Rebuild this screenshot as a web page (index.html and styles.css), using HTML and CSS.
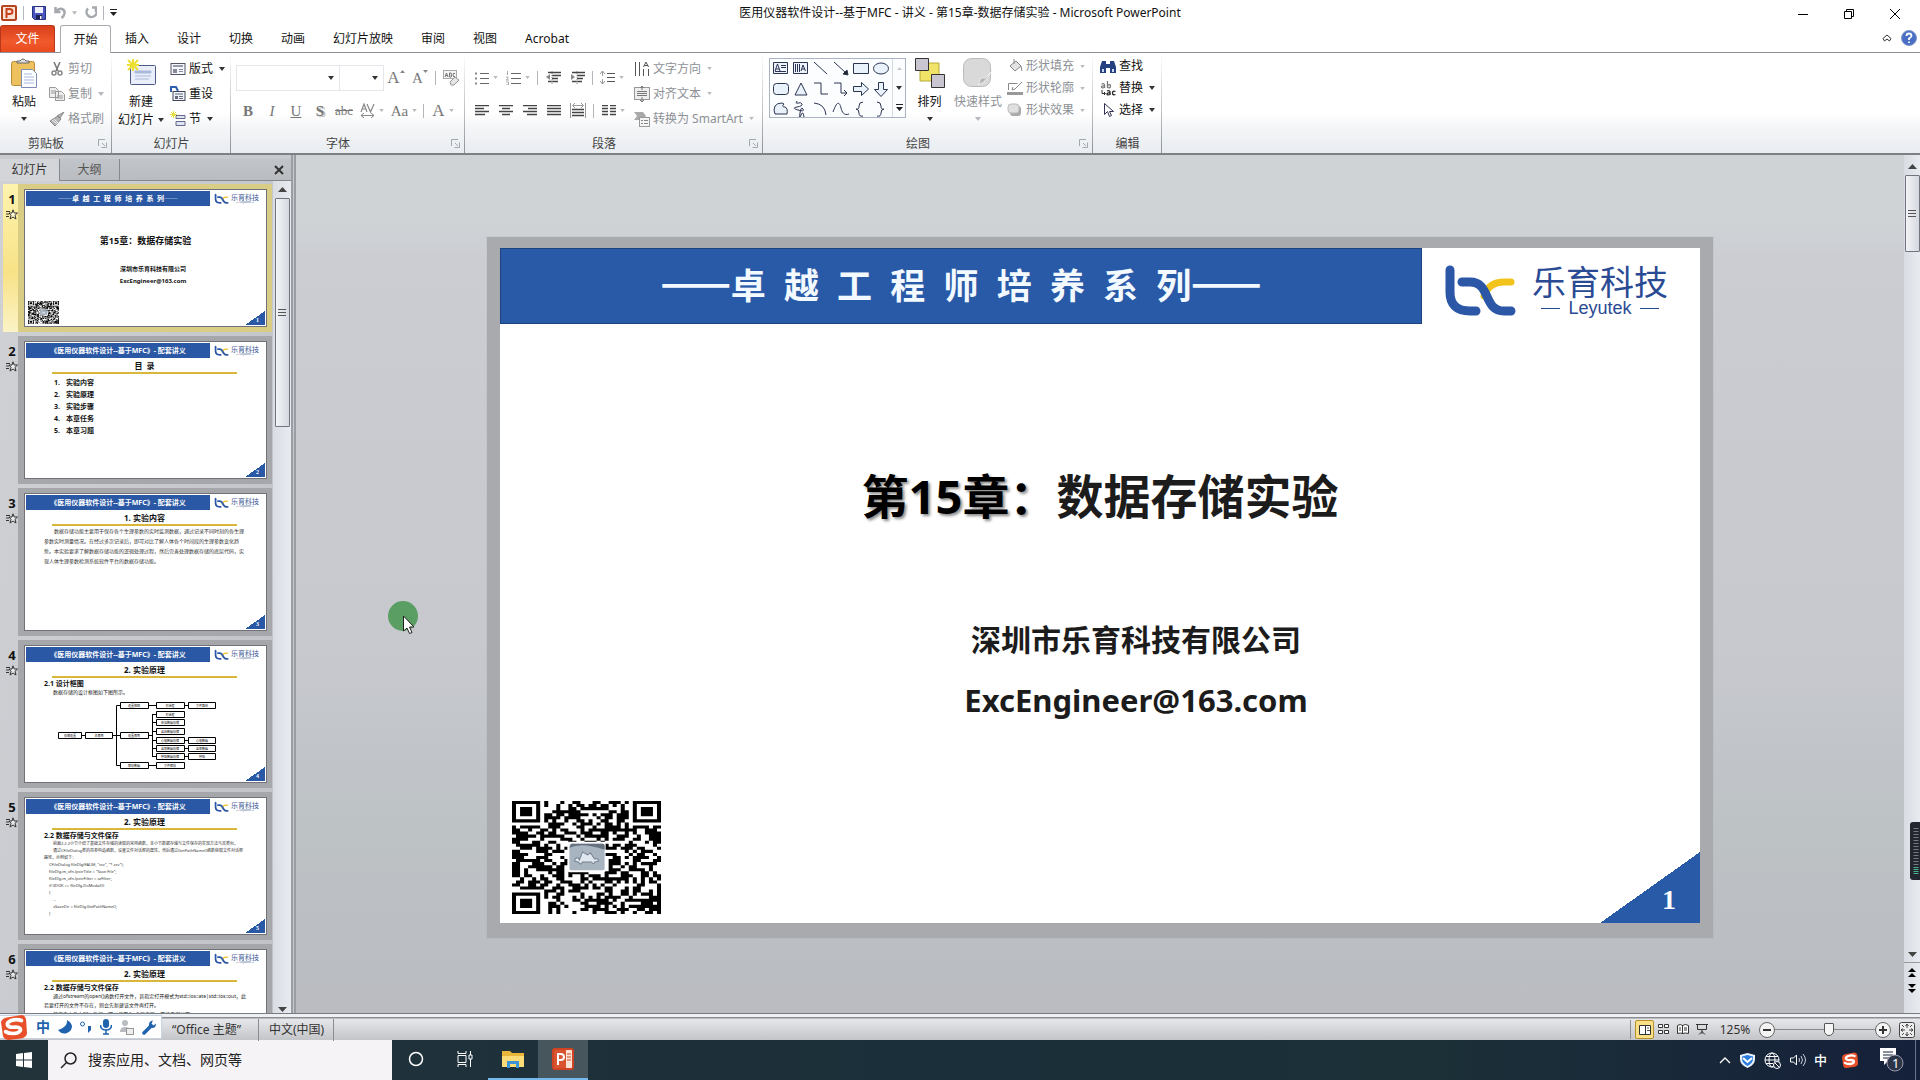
FILE: index.html
```html
<!DOCTYPE html>
<html lang="zh-CN">
<head>
<meta charset="utf-8">
<meta name="viewport" content="width=device-width, initial-scale=1">
<title>医用仪器软件设计--基于MFC - 讲义 - 第15章-数据存储实验 - Microsoft PowerPoint</title>
<link rel="stylesheet" href="styles.css">
</head>
<body>
<svg class="defs" aria-hidden="true">
  <symbol id="dd" viewBox="0 0 6 4"><path d="M0 0h6L3 4z" fill="currentColor"/></symbol>
  <symbol id="launch" viewBox="0 0 9 9"><path d="M.5 7V.5H7M4 4l3 3M8.500 3.500v5h-5" fill="none" stroke="#a3a8b0"/></symbol>
  <symbol id="bc" viewBox="0 0 76 54"><g fill="none" stroke-width="9" stroke-linecap="round"><path d="M69 20h-7q-15 0-20 14" stroke="#f2c31b" stroke-width="7"/><path d="M8 8v22q0 19 20 19h6M20 20h8c21 0 13 29 34 29h7" stroke="#2b57a6"/></g></symbol>
  <symbol id="anim" viewBox="0 0 12 11"><path d="M7 .8l1.200 3.200h3.300L9 6.300l1 3.700-3-2-3 2 1-3.700L3 4h3zM0 2.500h4M0 5h3M0 7.500h3" fill="#fff8" stroke="#222" stroke-width=".9"/></symbol>
  <symbol id="sogou" viewBox="0 0 28 28"><path d="M5 4l17-3q4 0 5 5l1 15q-1 4-5 5L8 28q-5 0-6-5L0 9q1-4 5-5z" fill="#e8502a"/><path d="M22 7q-5-2-11 0-5 2-4 5 2 3 8 2 6 0 6 3-1 4-8 4-5 0-8-2" fill="none" stroke="#fff" stroke-width="4" stroke-linecap="round"/></symbol>
  <symbol id="qr" viewBox="0 0 148 111"><path class="qr-cells" fill="#000"/><rect x="55" y="40" width="38" height="30" rx="2" fill="#fff"/><rect x="57" y="42" width="35" height="26" rx="2" fill="#a9b4c1"/><path d="M57 46q12-6 35 2v-4q0-2-2-2H59z" fill="#66717f"/><path d="M62 59q1-4 4-3l1 2 3-8 5 3 3-2 4 6q4-1 4 2l-4 1q-1 3-3 0h-9q-2 4-4 0z" fill="#dfe6ee" stroke="#75818f"/></symbol>
</svg>

<header class="titlebar">
  <div class="quick">
    <svg width="16" height="16" viewBox="0 0 16 16"><rect x="1" y="1" width="14" height="14" rx="1" fill="#fbe3d6" stroke="#b5431c" stroke-width="2"/><path d="M5.500 13V4h3q3 0 3 2.500T8.500 9h-3" fill="none" stroke="#c9421a" stroke-width="2"/></svg>
    <i class="bar"></i>
    <button aria-label="保存"><svg width="14" height="14" viewBox="0 0 14 14"><path d="M.5.500h13v13h-11l-2-2z" fill="#4a55c0" stroke="#25307f"/><path d="M3 1h8v6H3z" fill="#eef1fb"/><path d="M4 9h6v4H4z" fill="#1d2350"/><path d="M8 10h1.500v3H8z" fill="#fff"/></svg></button>
    <button aria-label="撤消"><svg width="12" height="13" viewBox="0 0 12 13"><path d="M1.500 1v5h5M2 5.500Q5 2 8 3q3 1 2.500 4.500Q10 10 7.500 12" fill="none" stroke="#a5a9ae" stroke-width="2.500"/></svg><svg class="dd pale" width="5" height="4"><use href="#dd"/></svg></button>
    <button aria-label="恢复"><svg width="12" height="13" viewBox="0 0 12 13"><path d="M7 1.500h4V6M3 2.500A5 5 0 1 0 10.500 3" fill="none" stroke="#a5a9ae" stroke-width="2.500"/></svg></button>
    <i class="bar"></i>
    <button class="more" aria-label="自定义快速访问工具栏"><svg width="7" height="7" viewBox="0 0 7 7"><path d="M0 0h7v1H0zM0 3h7L3.500 7z" fill="#222"/></svg></button>
  </div>
  <h1 class="doc-title">医用仪器软件设计--基于MFC - 讲义 - 第15章-数据存储实验 - Microsoft PowerPoint</h1>
  <div class="winctl">
    <button aria-label="最小化"><svg width="10" height="10"><path d="M0 5.500h10" stroke="#000"/></svg></button>
    <button aria-label="还原"><svg width="10" height="10"><path d="M.5 2.500h7v7h-7zM2.500 2V.5h7v7H8" fill="none" stroke="#000"/></svg></button>
    <button aria-label="关闭"><svg width="10" height="10"><path d="M0 0l10 10M10 0L0 10" stroke="#000"/></svg></button>
  </div>
</header>

<nav class="tabs">
  <button class="tab file">文件</button>
  <button class="tab active">开始</button>
  <button class="tab">插入</button>
  <button class="tab">设计</button>
  <button class="tab">切换</button>
  <button class="tab">动画</button>
  <button class="tab">幻灯片放映</button>
  <button class="tab">审阅</button>
  <button class="tab">视图</button>
  <button class="tab">Acrobat</button>
  <div class="tabs-end">
    <button aria-label="功能区最小化"><svg width="10" height="8" viewBox="0 0 10 8"><path d="M1 4.500L5 1l4 3.500L7.500 7 5 5 2.500 7z" fill="#fff" stroke="#333"/></svg></button>
    <button aria-label="帮助"><svg width="16" height="16" viewBox="0 0 16 16"><circle cx="8" cy="8" r="7.500" fill="#4a6fc4" stroke="#8097c8"/><path d="M5.500 6q0-2.500 2.500-2.500T10.500 6Q10.500 7 8 8.500V10M8 11.500v1.500" fill="none" stroke="#fff" stroke-width="1.800"/></svg></button>
  </div>
</nav>

<section class="ribbon">
  <div class="group g-clip">
    <div class="body">
      <button class="big"><svg width="26" height="30" viewBox="0 0 26 30"><rect x=".5" y="3.500" width="23" height="24" rx="2" fill="#eec15f" stroke="#b98d3b"/><path d="M6 5h12V3h-3q-3-4-6 0H6z" fill="#ddd" stroke="#666"/><path d="M10.500 11.500h11l4 4v14h-15z" fill="#fdfeff" stroke="#7d8db5"/><path d="M13 16h8M13 19h10M13 22h10M13 25h10" stroke="#a8b9dc"/></svg><span>粘贴</span><svg class="dd" width="6" height="4"><use href="#dd"/></svg></button>
      <div class="stack">
        <button class="row off"><svg width="16" height="14" viewBox="0 0 16 14"><path d="M5 0l4 9M11 0L7 9" stroke="#777" stroke-width="1.500"/><circle cx="5" cy="11" r="2" fill="none" stroke="#888" stroke-width="1.500"/><circle cx="11" cy="11" r="2" fill="none" stroke="#888" stroke-width="1.500"/></svg>剪切</button>
        <button class="row off"><svg width="16" height="14" viewBox="0 0 16 14"><path d="M.5.500h6l3 3v7h-9zM6.500 4.500h6l3 3v6h-9z" fill="#eee" stroke="#999"/><path d="M2 4h5M2 6h4M8 9h6M8 11h6" stroke="#999"/></svg>复制<svg class="dd pale" width="6" height="4"><use href="#dd"/></svg></button>
        <button class="row off"><svg width="16" height="14" viewBox="0 0 16 14"><path d="M15 0l-4 6-3-2zM9 4l3 3-6 7-5-5z" fill="#b5b5b5" stroke="#888"/><path d="M3 8l5 4M5 7l4 4" stroke="#eee"/></svg>格式刷</button>
      </div>
    </div>
    <div class="cap"><span>剪贴板</span><svg width="9" height="9"><use href="#launch"/></svg></div>
  </div>

  <div class="group g-slides">
    <div class="body">
      <button class="big wide"><svg width="30" height="30" viewBox="0 0 30 30"><rect x="4.500" y="7.500" width="25" height="19" rx="1" fill="#e9eefa" stroke="#4c5a84"/><path d="M9 13h16v2H9zM9 18h16M9 21h14" fill="#aab8da" stroke="#aab8da"/><path d="M7 1v12M1 7h12M2 2l10 10M12 2L2 12" stroke="#ecdf30" stroke-width="2"/></svg><span>新建</span><span>幻灯片<svg class="dd" width="6" height="4"><use href="#dd"/></svg></span></button>
      <div class="stack">
        <button class="row"><svg width="16" height="14" viewBox="0 0 16 14"><rect x="1" y="1.500" width="14" height="11" fill="#f4f7fd" stroke="#556"/><path d="M3 4h10" stroke="#99a" stroke-width="2"/><path d="M3 7h4v4H3z" fill="#889"/><path d="M9 7.500h4M9 9.500h4" stroke="#889"/></svg>版式<svg class="dd" width="6" height="4"><use href="#dd"/></svg></button>
        <button class="row"><svg width="16" height="15" viewBox="0 0 16 15"><rect x="3" y="5.500" width="12" height="9" fill="#eef3fd" stroke="#445"/><path d="M5 8h8M9 10.500h4M9 12.500h4" stroke="#667"/><path d="M5 10h3v3H5z" fill="#667"/><path d="M1 6V1h5l2 4" fill="none" stroke="#2d5fae" stroke-width="2"/></svg>重设</button>
        <button class="row"><svg width="16" height="15" viewBox="0 0 16 15"><path d="M6 4.500h9v3H6zM6 10.500h9v4H6z" fill="#dde6f5" stroke="#668"/><path d="M3.500 0v7M0 3.500h7M1 1l5 5M6 1L1 6" stroke="#e6dc3a"/></svg>节<svg class="dd" width="6" height="4"><use href="#dd"/></svg></button>
      </div>
    </div>
    <div class="cap"><span>幻灯片</span></div>
  </div>

  <div class="group g-font">
    <div class="body lines">
      <div class="line">
        <label class="combo name"><select disabled aria-label="字体"><option></option></select><svg class="dd" width="6" height="4"><use href="#dd"/></svg></label><label class="combo size"><select disabled aria-label="字号"><option></option></select><svg class="dd" width="6" height="4"><use href="#dd"/></svg></label>
        <button class="ic grow serif big-a" aria-label="增大字号">A<svg class="dd" width="5" height="3" viewBox="0 0 5 3"><path d="M0 3h5L2.500 0z" fill="#888"/></svg></button>
        <button class="ic grow serif" aria-label="减小字号">A<svg class="dd" width="5" height="3" viewBox="0 0 5 3"><path d="M0 0h5L2.500 3z" fill="#888"/></svg></button>
        <i class="bar"></i>
        <button class="ic" aria-label="清除格式"><svg width="17" height="16" viewBox="0 0 17 16"><rect x=".5" y=".5" width="13" height="8" fill="#f3f3f3" stroke="#aaa"/><path d="M2 7l1.500-4L5 7M2.500 5.500h2M6.500 3v4h1.500q1.500-1 0-2 1-1 0-2zM12 3.500q-2-1-2 1.500t2 1.500" fill="none" stroke="#777"/><path d="M7 12l5-5 4 3-5 5-3 0z" fill="#e4e4e4" stroke="#999"/></svg></button>
      </div>
      <div class="line">
        <button class="ic serif"><b>B</b></button>
        <button class="ic serif"><em>I</em></button>
        <button class="ic serif"><u>U</u></button>
        <button class="ic serif shade"><b>S</b></button>
        <button class="ic serif sm"><s>abc</s></button>
        <button class="ic dual" aria-label="字符间距"><svg width="15" height="15" viewBox="0 0 15 15"><path d="M1 9l3-8 3 8M2 6h4M7 1l3.500 8L14 1" fill="none" stroke="#888" stroke-width="1.200"/><path d="M1 12.500h13M4 10l-3 2.500L4 15M11 10l3 2.500L11 15" fill="none" stroke="#888"/></svg><svg class="dd pale" width="5" height="3"><use href="#dd"/></svg></button>
        <button class="ic dual serif">Aa<svg class="dd pale" width="5" height="3"><use href="#dd"/></svg></button>
        <i class="bar"></i>
        <button class="ic dual serif big-a">A<svg class="dd pale" width="5" height="3"><use href="#dd"/></svg></button>
      </div>
    </div>
    <div class="cap"><span>字体</span><svg width="9" height="9"><use href="#launch"/></svg></div>
  </div>

  <div class="group g-para">
    <div class="body">
      <div class="lines">
        <div class="line">
          <button class="ic dual" aria-label="项目符号"><svg width="14" height="14" viewBox="0 0 14 14"><path d="M5 2.500h9M5 7.500h9M5 12.500h9" stroke="#666"/><path d="M0 1.500h2v2H0zM0 6.500h2v2H0zM0 11.500h2v2H0z" fill="#888"/></svg><svg class="dd pale" width="5" height="3"><use href="#dd"/></svg></button>
          <button class="ic dual" aria-label="编号"><svg width="15" height="14" viewBox="0 0 15 14"><path d="M5 2.500h10M5 7.500h10M5 12.500h10" stroke="#666"/><path d="M1.500 0v4M0 6h2v1.500L0 9h3M0 11h2.500v3H0" fill="none" stroke="#999" stroke-width=".8"/></svg><svg class="dd pale" width="5" height="3"><use href="#dd"/></svg></button>
          <i class="bar"></i>
          <button class="ic" aria-label="降低列表级别"><svg width="15" height="13" viewBox="0 0 15 13"><path d="M2 1.500h13M6 4.500h9M6 7.500h6M2 10.500h10" stroke="#444" stroke-width="1.500"/><path d="M6 0v13" stroke="#888" stroke-dasharray="1 1"/><path d="M0 6l4-3v6z" fill="#888"/></svg></button>
          <button class="ic" aria-label="提高列表级别"><svg width="15" height="13" viewBox="0 0 15 13"><path d="M2 1.500h13M7 4.500h8M7 7.500h6M2 10.500h10" stroke="#444" stroke-width="1.500"/><path d="M7 0v13" stroke="#888" stroke-dasharray="1 1"/><path d="M5 6L1 3v6z" fill="#888"/></svg></button>
          <i class="bar"></i>
          <button class="ic dual" aria-label="行距"><svg width="15" height="15" viewBox="0 0 15 15"><path d="M7 3.500h8M7 7.500h8M7 11.500h8" stroke="#555"/><path d="M2.500 1v5M0 4l2.500-3L5 4M2.500 9v5M0 11l2.500 3L5 11" fill="none" stroke="#999"/></svg><svg class="dd pale" width="5" height="3"><use href="#dd"/></svg></button>
        </div>
        <div class="line">
          <button class="ic" aria-label="左对齐"><svg width="14" height="12"><path d="M0 .5h14M0 3.500h9M0 6.500h14M0 9.500h10" stroke="#444" stroke-width="1.500"/></svg></button>
          <button class="ic" aria-label="居中"><svg width="14" height="12"><path d="M0 .5h14M3 3.500h8M0 6.500h14M3 9.500h8" stroke="#444" stroke-width="1.500"/></svg></button>
          <button class="ic" aria-label="右对齐"><svg width="14" height="12"><path d="M0 .5h14M5 3.500h9M0 6.500h14M4 9.500h10" stroke="#444" stroke-width="1.500"/></svg></button>
          <button class="ic" aria-label="两端对齐"><svg width="14" height="12"><path d="M0 .5h14M0 3.500h14M0 6.500h14M0 9.500h14" stroke="#444" stroke-width="1.500"/></svg></button>
          <button class="ic" aria-label="分散对齐"><svg width="16" height="15"><path d="M.5 0v15M15.500 0v15M3 2.500h10M5 0L2.500 2.500 5 5M11 0l2.500 2.500L11 5" fill="none" stroke="#999"/><path d="M2 6.500h12M2 9.500h12M2 12.500h12" stroke="#444" stroke-width="1.500"/></svg></button>
          <i class="bar"></i>
          <button class="ic dual" aria-label="分栏"><svg width="14" height="12"><path d="M0 .5h6M8 .5h6M0 3.500h6M8 3.500h6M0 6.500h6M8 6.500h6M0 9.500h6M8 9.500h6" stroke="#444" stroke-width="1.500"/></svg><svg class="dd pale" width="5" height="3"><use href="#dd"/></svg></button>
        </div>
      </div>
      <div class="stack">
        <button class="row off"><svg width="16" height="16" viewBox="0 0 16 16"><path d="M1.500 1v14M5.500 1v14M9.500 8v7M14.500 8v7M9.500 6L12 1l2.500 5M10 4.500h4" fill="none" stroke="#555"/></svg>文字方向<svg class="dd pale" width="5" height="3"><use href="#dd"/></svg></button>
        <button class="row off"><svg width="16" height="16" viewBox="0 0 16 16"><rect x=".5" y="1.500" width="15" height="12" fill="#eee" stroke="#999"/><path d="M3 5.500h10M3 7.500h10M3 9.500h10" stroke="#777"/><path d="M8 0v4M6 2l2-2 2 2M8 11v5M6 14l2 2 2-2" fill="none" stroke="#777"/></svg>对齐文本<svg class="dd pale" width="5" height="3"><use href="#dd"/></svg></button>
        <button class="row off"><svg width="16" height="16" viewBox="0 0 16 16"><path d="M0 1h9l3 4-3 4H0l3-4z" fill="#aaa"/><rect x="5.500" y="6.500" width="10" height="9" fill="#f4f4f4" stroke="#999"/><path d="M7 9.500h2M10 9.500h4M7 12.500h2M10 12.500h4" stroke="#888"/></svg>转换为 SmartArt<svg class="dd pale" width="5" height="3"><use href="#dd"/></svg></button>
      </div>
    </div>
    <div class="cap"><span>段落</span><svg width="9" height="9"><use href="#launch"/></svg></div>
  </div>

  <div class="group g-draw">
    <div class="body">
      <div class="gallery">
        <svg class="shapes" width="122" height="58" viewBox="0 0 122 58" fill="none" stroke="#2b3552">
          <path d="M3.500 3.500h14v11h-14z" fill="#eef4fb"/><path d="M5 12l2.500-7 2.500 7M6 10h3M11 6.500h5M11 8.500h5M5 12.500h11"/>
          <path d="M23.500 3.500h14v11h-14z" fill="#eef4fb"/><path d="M25.500 5v8M27.500 5v8M29.500 5v8M31 12l2-6 2.500 6M32 10h3"/>
          <path d="M44 3l13 12M64 3l12 11"/><path d="M78 16l-5-1 4-4z" fill="#222"/>
          <path d="M83.500 4.500h15v10h-15z" fill="#e9f1fa"/><ellipse cx="111" cy="9.500" rx="7.500" ry="5.500" fill="#e9f1fa"/>
          <rect x="3.500" y="24.500" width="15" height="11" rx="3" fill="#e9f1fa"/><path d="M31 24l6 12H25z" fill="#e9f1fa"/>
          <path d="M44 24h7v11h7M64 24h7v10h6M74 31l3 3-3 3"/>
          <path d="M83.500 27.500h8v-4l7 6.500-7 6.500v-4h-8zM108.500 23.500h5v7h4l-6.500 7-6.500-7h4z" fill="#e9f1fa"/>
          <path d="M5 47q2-3 7-3l2 1q-3 3 1 3 3 1 2 7H5q-2-4 0-8z" fill="#e9f1fa"/><path d="M27 42q-2 3 1 2t4 1-5 3 1 3 5-1-3 4 1 2 3 2"/>
          <path d="M44 44q11 1 12 12M63 53c5-14 7-8 8-4s3 8 8 6M93 43q-4 0-4 4t-3 3q3 0 3 4t4 3M107 43q4 0 4 4t3 3q-3 0-3 4t-4 3"/>
        </svg>
        <div class="gal-ctl"><svg class="dd pale" width="5" height="3"><path d="M0 3h5L2.500 0z" fill="#c5c8cd"/></svg><svg class="dd" width="6" height="4"><use href="#dd"/></svg><svg width="7" height="7" viewBox="0 0 7 7"><path d="M0 0h7v1H0zM0 3h7L3.500 7z" fill="#222"/></svg></div>
      </div>
      <button class="big arrange"><svg width="30" height="30" viewBox="0 0 30 30"><path d="M5 5h19v18H5z" fill="#f1e368" stroke="#b7a83a"/><path d="M.5.500h13v12H.5zM16.500 16.500h13v13h-13z" fill="#c9c6d2" stroke="#333"/></svg><span>排列</span><svg class="dd" width="6" height="4"><use href="#dd"/></svg></button>
      <button class="big quickst off"><svg width="30" height="30" viewBox="0 0 30 30"><rect x=".5" y=".5" width="27" height="28" rx="8" fill="#d9d9d9" stroke="#bbb"/><path d="M29 13l-8 11-6 3q2-2 2-6 3-2 5-1z" fill="#b5b5b5" stroke="#eee"/></svg><span>快速样式</span><svg class="dd pale" width="6" height="4"><use href="#dd"/></svg></button>
      <div class="stack tight">
        <button class="row off"><svg width="16" height="14" viewBox="0 0 16 14"><path d="M3 7l6-5 5 5-6 5z" fill="#e3e3e3" stroke="#888"/><path d="M7 5V0M14 7l1 5" stroke="#888"/></svg>形状填充<svg class="dd pale" width="5" height="3"><use href="#dd"/></svg></button>
        <button class="row off"><svg width="16" height="15" viewBox="0 0 16 15"><path d="M1.500 9V2.500h9M15 1l-7 7-3 1 1-3" fill="none" stroke="#888"/><path d="M0 11h16v3H0z" fill="#999"/></svg>形状轮廓<svg class="dd pale" width="5" height="3"><use href="#dd"/></svg></button>
        <button class="row off"><svg width="16" height="14" viewBox="0 0 16 14"><rect x="3" y="3" width="11" height="10" rx="3" fill="#aaa"/><rect x="1" y="1" width="11" height="9" rx="3" fill="#e0e0e0" stroke="#bbb"/></svg>形状效果<svg class="dd pale" width="5" height="3"><use href="#dd"/></svg></button>
      </div>
    </div>
    <div class="cap"><span>绘图</span><svg width="9" height="9"><use href="#launch"/></svg></div>
  </div>

  <div class="group g-edit">
    <div class="body">
      <div class="stack tight">
        <button class="row"><svg width="16" height="13" viewBox="0 0 16 13"><path d="M2 1h4v3h4V1h4l2 6v6h-6V8H6v5H0V7z" fill="#26407f"/><path d="M2 9h2v3H2zM12 9h2v3h-2z" fill="#c7d6f4"/></svg>查找</button>
        <button class="row"><svg width="16" height="15" viewBox="0 0 16 15"><g fill="none" stroke-width="1.300"><path d="M1.500 3q3-1 3 1v3M4.500 5q-3-.5-3 1t3 .5M7.500 0v7M7.500 4.500q3-2 3 .5t-3 1.500" stroke="#777"/><path d="M7 10q3-1 3 1v3M10 12q-3-.5-3 1t3 .5M15.500 10.500q-3-1-3 1.500t3 1.500" stroke="#222"/><path d="M2 9v3.500h3M4 11l1.500 1.500L4 14" stroke="#333" stroke-width="1"/></g></svg>替换<svg class="dd" width="6" height="4"><use href="#dd"/></svg></button>
        <button class="row"><svg width="16" height="14" viewBox="0 0 16 14"><path d="M4.500.500v11l3-3 2 5 2-1-2-4h4z" fill="#fff" stroke="#335"/></svg>选择<svg class="dd" width="6" height="4"><use href="#dd"/></svg></button>
      </div>
    </div>
    <div class="cap"><span>编辑</span></div>
  </div>
</section>

<main class="work">
  <aside class="pane">
    <div class="pane-tabs">
      <button class="ptab on">幻灯片</button><button class="ptab">大纲</button>
      <button class="pane-x" aria-label="关闭"><svg width="10" height="10"><path d="M1 1l8 8M9 1L1 9" stroke="#333" stroke-width="2"/></svg></button>
    </div>
    <div class="pane-main">
      <ol class="thumbs">
        <li class="thumb sel">
          <div class="num">1<svg width="12" height="11"><use href="#anim"/></svg></div>
          <div class="frame"><div class="mini">
            <div class="m-head"><div class="m-ban"><span class="dash">——</span>卓&nbsp; 越&nbsp; 工&nbsp; 程&nbsp; 师&nbsp; 培&nbsp; 养&nbsp; 系&nbsp; 列<span class="dash">——</span></div><div class="m-logo"><svg width="15" height="11"><use href="#bc"/></svg><span>乐育科技<small>— Leyutek —</small></span></div></div>
            <p class="m-big">第15章：数据存储实验</p>
            <p class="m-sub">深圳市乐育科技有限公司<br>ExcEngineer@163.com</p>
            <svg class="m-qr" width="31" height="23" viewBox="0 0 148 111" preserveAspectRatio="none"><use href="#qr"/></svg>
            <span class="m-no">1</span>
          </div></div>
        </li>
        <li class="thumb">
          <div class="num">2<svg width="12" height="11"><use href="#anim"/></svg></div>
          <div class="frame"><div class="mini">
            <div class="m-head"><div class="m-ban">《医用仪器软件设计--基于MFC》- 配套讲义</div><div class="m-logo"><svg width="15" height="11"><use href="#bc"/></svg><span>乐育科技<small>— Leyutek —</small></span></div></div>
            <h3>目&nbsp; 录</h3>
            <ol class="toc"><li>实验内容</li><li>实验原理</li><li>实验步骤</li><li>本章任务</li><li>本章习题</li></ol>
            <span class="m-no">2</span>
          </div></div>
        </li>
        <li class="thumb">
          <div class="num">3<svg width="12" height="11"><use href="#anim"/></svg></div>
          <div class="frame"><div class="mini">
            <div class="m-head"><div class="m-ban">《医用仪器软件设计--基于MFC》- 配套讲义</div><div class="m-logo"><svg width="15" height="11"><use href="#bc"/></svg><span>乐育科技<small>— Leyutek —</small></span></div></div>
            <h3>1. 实验内容</h3>
            <p class="m-para">数据存储功能主要用于保存各个生理参数的实时监测数据，通过记录不同时刻的各生理参数实时测量情况。在经过多次记录后，即可对比了解人体各个时间段的生理参数变化趋势。本实验要求了解数据存储功能的逻辑处理过程，然后完善处理数据存储的底层代码，实现人体生理参数检测系统软件平台的数据存储功能。</p>
            <span class="m-no">3</span>
          </div></div>
        </li>
        <li class="thumb">
          <div class="num">4<svg width="12" height="11"><use href="#anim"/></svg></div>
          <div class="frame"><div class="mini">
            <div class="m-head"><div class="m-ban">《医用仪器软件设计--基于MFC》- 配套讲义</div><div class="m-logo"><svg width="15" height="11"><use href="#bc"/></svg><span>乐育科技<small>— Leyutek —</small></span></div></div>
            <h3>2. 实验原理</h3>
            <h4>2.1 设计框图</h4>
            <p class="m-line in">数据存储的设计框图如下图所示。</p>
            <svg class="flow" width="158" height="68" viewBox="0 0 158 68">
              <g fill="#fff" stroke="#000"><path d="M23 34.500h4M54 34.500h8M58.500 4.500v60M58.500 4.500h4M58.500 64.500h4M90 4.500h8M90 34.500h4M94.500 13v43M94.500 13.500h4M94.500 21.500h4M94.500 30.500h4M94.500 39.500h4M94.500 47.500h4M94.500 55.500h4M90 64.500h8M126 4.500h4M126 39.500h4M126 47.500h4M126 55.500h4"/>
              <path d="M.5 31.500h23v6H.5zM27.500 31.500h27v6h-27zM62.500 1.500h28v6h-28zM62.500 31.500h28v6h-28zM62.500 61.500h28v6h-28zM98.500 1.500h28v6h-28zM98.500 10.500h28v6h-28zM98.500 18.500h28v6h-28zM98.500 27.500h28v6h-28zM98.500 36.500h28v6h-28zM98.500 44.500h28v6h-28zM98.500 52.500h28v6h-28zM98.500 61.500h28v6h-28zM130.500 1.500h27v6h-27zM130.500 36.500h27v6h-27zM130.500 44.500h27v6h-27zM130.500 52.500h27v6h-27z"/></g>
              <g font-size="3" text-anchor="middle"><text x="12" y="36">存储设置</text><text x="41" y="36">主界面</text><text x="76" y="6">设置按钮</text><text x="76" y="36">设置界面</text><text x="76" y="66">保存数据</text><text x="112" y="6">对话框</text><text x="112" y="15">对话框</text><text x="112" y="23">体温数据存储</text><text x="112" y="32">血压数据存储</text><text x="112" y="41">心电数据存储</text><text x="112" y="49">血氧数据存储</text><text x="112" y="57">呼吸数据存储</text><text x="112" y="66">文件保存</text><text x="144" y="6">文件路径</text><text x="144" y="41">心电数据</text><text x="144" y="49">血氧数据</text><text x="144" y="57">呼吸</text></g>
            </svg>
            <span class="m-no">4</span>
          </div></div>
        </li>
        <li class="thumb">
          <div class="num">5<svg width="12" height="11"><use href="#anim"/></svg></div>
          <div class="frame"><div class="mini">
            <div class="m-head"><div class="m-ban">《医用仪器软件设计--基于MFC》- 配套讲义</div><div class="m-logo"><svg width="15" height="11"><use href="#bc"/></svg><span>乐育科技<small>— Leyutek —</small></span></div></div>
            <h3>2. 实验原理</h3>
            <h4>2.2 数据存储与文件保存</h4>
            <p class="m-code in">前面2.2.2小节介绍了基础文件存储的读取的常用函数，本小节数据存储与文件保存的实现方法与其类似，</p>
            <p class="m-code in">通过CFileDialog类的带参构造函数，设置文件对话框的属性，然后通过GetPathName()函数获取文件对话框</p>
            <p class="m-code">路径，示例如下：</p>
            <pre class="m-code">CFileDialog fileDlg(FALSE, "csv", "*.csv");
fileDlg.m_ofn.lpstrTitle = "Save File";
fileDlg.m_ofn.lpstrFilter = szFilter;
if (IDOK == fileDlg.DoModal())
{
    ...
    sSaveDir = fileDlg.GetPathName();
}</pre>
            <span class="m-no">5</span>
          </div></div>
        </li>
        <li class="thumb">
          <div class="num">6<svg width="12" height="11"><use href="#anim"/></svg></div>
          <div class="frame"><div class="mini">
            <div class="m-head"><div class="m-ban">《医用仪器软件设计--基于MFC》- 配套讲义</div><div class="m-logo"><svg width="15" height="11"><use href="#bc"/></svg><span>乐育科技<small>— Leyutek —</small></span></div></div>
            <h3>2. 实验原理</h3>
            <h4>2.2 数据存储与文件保存</h4>
            <p class="m-line in">通过ofstream的open()函数打开文件，其指定打开模式为std::ios::ate|std::ios::out，此</p>
            <p class="m-line">若要打开的文件不存在，则会先新建该文件再打开。</p>
            <p class="m-line in">若要向文件中写入数据，可以使用 “&lt;&lt;” 操作符，用法示例如下：</p>
          </div></div>
        </li>
      </ol>
      <div class="scroll narrow"><svg width="9" height="5"><path d="M4.500 0L9 5H0z" fill="#444"/></svg><div class="knob k-left"><i></i></div><span class="fill"></span><svg width="9" height="5"><path d="M0 0h9L4.500 5z" fill="#444"/></svg></div>
    </div>
  </aside>

  <section class="canvas">
    <article class="slide">
      <header class="s-head">
        <div class="s-ban"><span class="dash">——</span>卓&nbsp; 越&nbsp; 工&nbsp; 程&nbsp; 师&nbsp; 培&nbsp; 养&nbsp; 系&nbsp; 列<span class="dash">——</span></div>
        <div class="s-logo"><svg width="76" height="54"><use href="#bc"/></svg><div class="s-name"><span>乐育科技</span><div class="s-en"><i></i>Leyutek<i></i></div></div></div>
      </header>
      <h2 class="s-title"><span class="shadowed">第15章：</span>数据存储实验</h2>
      <p class="s-sub">深圳市乐育科技有限公司</p>
      <p class="s-sub mail">ExcEngineer@163.com</p>
      <footer class="s-foot">
        <svg class="s-qr" width="149" height="113" viewBox="0 0 148 111" preserveAspectRatio="none"><use href="#qr"/></svg>
        <span class="s-no">1</span>
      </footer>
    </article>
  </section>
  <div class="scroll"><svg width="9" height="5"><path d="M4.500 0L9 5H0z" fill="#444"/></svg><div class="knob k-main"><i></i></div><span class="fill"></span><svg width="9" height="5"><path d="M0 0h9L4.500 5z" fill="#444"/></svg>
    <div class="pager"><svg width="8" height="10"><path d="M4 0l4 4H0zM4 5l4 4H0z" fill="#000"/></svg><svg width="8" height="10"><path d="M0 0h8L4 4zM0 5h8L4 9z" fill="#000"/></svg></div></div>

  <svg class="pointer" width="31" height="33" viewBox="0 0 31 33"><circle cx="15" cy="15" r="15" fill="#5b9e63"/><path d="M15.500 15v15l3.500-3 2.500 5.500 2.500-1-2.500-5.500h4.500z" fill="#fff" stroke="#222"/></svg>
  <svg class="meter" width="10" height="58" viewBox="0 0 10 58"><rect width="14" height="58" rx="3" fill="#23262e"/><path d="M6 6v38" stroke="#737985" stroke-width="5" stroke-dasharray="1 2"/><path d="M6 45v8" stroke="#49b08c" stroke-width="5" stroke-dasharray="1 1"/></svg>
</main>

<footer class="status">
  <span class="st-item theme">“Office 主题”</span>
  <span class="st-item">中文(中国)</span>
  <div class="st-right">
    <button class="vw on" aria-label="普通视图"><svg width="12" height="10"><path d="M.5.500h11v9H.5zM6.500 0v10" fill="#fff" stroke="#333"/><path d="M8 5.500h3M8 3h2" stroke="#555"/></svg></button>
    <button class="vw" aria-label="幻灯片浏览"><svg width="12" height="11"><path d="M.5.500h4v3h-4zM6.500.500h4v3h-4zM.5 6.500h4v3h-4zM6.500 6.500h4v3h-4z" fill="#fff" stroke="#333"/></svg></button>
    <button class="vw" aria-label="阅读视图"><svg width="12" height="11"><path d="M.5 1.500q3-2 5 0 3-2 6 0v8q-3-1-6 0-2-1-5 0zM5.500 1v9M2 4h2M2 6h2M7 4h3M7 6h3" fill="#fff" stroke="#333"/></svg></button>
    <button class="vw" aria-label="幻灯片放映"><svg width="12" height="11"><path d="M0 .5h12M1.500 1v4.500h9V1M6 6v4M3 10.500l3-3 3 3" fill="none" stroke="#333"/></svg></button>
    <button class="pct">125%</button>
    <button class="rnd" aria-label="缩小"><svg width="16" height="16"><circle cx="8" cy="8" r="7.500" fill="#f4f4f5" stroke="#666"/><path d="M4 8h8" stroke="#333" stroke-width="2"/></svg></button>
    <input class="zoom" type="range" min="0" max="100" value="54" aria-label="缩放">
    <button class="rnd" aria-label="放大"><svg width="16" height="16"><circle cx="8" cy="8" r="7.500" fill="#f4f4f5" stroke="#666"/><path d="M4 8h8M8 4v8" stroke="#333" stroke-width="2"/></svg></button>
    <button class="fit" aria-label="适应窗口"><svg width="16" height="16"><rect x=".5" y=".5" width="15" height="15" rx="2" fill="#eee" stroke="#444"/><path d="M8 2v4M8 10v4M2 8h4M10 8h4M6.500 4L8 2l1.500 2M6.500 12L8 14l1.500-2M4 6.500L2 8l2 1.500M12 6.500L14 8l-2 1.500M3 3l2 2M13 3l-2 2M3 13l2-2M13 13l-2-2" fill="none" stroke="#444"/></svg></button>
  </div>
  <div class="ime">
    <svg width="28" height="26"><use href="#sogou"/></svg>
    <b>中</b>
    <svg width="14" height="14"><path d="M9 0q1 7-9 10 4 5 9 3 5-2 5-7-1-4-5-6z" fill="#1f62ad"/></svg>
    <svg width="12" height="12"><circle cx="2.500" cy="3" r="2" fill="none" stroke="#1f62ad"/><path d="M8 5h3v4l-3 3z" fill="#1f62ad"/></svg>
    <svg width="12" height="16"><rect x="3" width="6" height="9" rx="3" fill="#1f62ad"/><path d="M.5 6q0 5 5.500 5t5.500-5M6 11v4M3 15h6" fill="none" stroke="#1f62ad" stroke-width="1.500"/></svg>
    <svg width="14" height="15"><circle cx="5" cy="3" r="3" fill="#b9bcc0"/><path d="M0 12q0-5 5-5t5 3v2z" fill="#b9bcc0"/><rect x="6.500" y="8.500" width="7" height="6" fill="#eee" stroke="#999"/></svg>
    <svg width="15" height="15"><path d="M2 13l7-7" stroke="#1f62ad" stroke-width="3.500" stroke-linecap="round"/><path d="M14 3.500q0 4.500-4 4.500T7 4.500Q7 1 11 .5L9.500 3.500l2 2z" fill="#1f62ad"/></svg>
  </div>
</footer>

<footer class="taskbar">
  <button class="start" aria-label="开始"><svg width="16" height="16"><path d="M0 2l7-1v6.500H0zM8 1l8-1v7.500H8zM0 8.500h7V15l-7-1zM8 8.500h8V16l-8-1z" fill="#fff"/></svg></button>
  <label class="search"><svg width="17" height="17"><circle cx="10.500" cy="6.500" r="5.500" fill="none" stroke="#222" stroke-width="1.500"/><path d="M6.500 10.500L1 16" stroke="#222" stroke-width="1.500"/></svg><input type="text" placeholder="搜索应用、文档、网页等" aria-label="搜索"></label>
  <button class="app" aria-label="Cortana"><svg width="16" height="16"><circle cx="8" cy="8" r="6.500" fill="none" stroke="#fff" stroke-width="1.500"/></svg></button>
  <button class="app" aria-label="任务视图"><svg width="17" height="16"><path d="M2 4.500h8v7H2zM2 0v2.500h8V0M2 16v-2.500h8V16M14.500 0v4M14.500 8v8M13 4h3v4h-3z" fill="none" stroke="#fff"/></svg></button>
  <button class="app open" aria-label="文件资源管理器"><svg width="22" height="18"><path d="M0 1h8l2 2h12v14H0z" fill="#e9b63a"/><path d="M0 6h22v11H0z" fill="#fbdc79"/><path d="M5 11h12v7h-3v-4H8v4H5z" fill="#3b94d4"/></svg></button>
  <button class="app open on" aria-label="PowerPoint"><svg width="22" height="22"><rect x="1" y="1" width="20" height="20" rx="2" fill="#fbe3d6" stroke="#d14423" stroke-width="2"/><path d="M15 6h4M15 9h4M15 12h4" stroke="#cf4a25"/><path d="M2 2h12v18H2z" fill="#d9552f"/><path d="M6 17V6h2.500q3.500 0 3.500 3T8.500 12H6" fill="none" stroke="#fff" stroke-width="2"/></svg></button>
  <div class="tray">
    <svg width="12" height="7"><path d="M1 6l5-5 5 5" fill="none" stroke="#fff" stroke-width="1.300"/></svg>
    <svg width="15" height="15"><path d="M7.500 0L15 2v4q0 6-7.500 9Q0 12 0 6V2z" fill="#e9f3ff"/><path d="M7.500 2L13 3.500V6q0 4-5.500 7Q2 10 2 6V3.500z" fill="#2d7de0"/><path d="M3 5l4.500 4L12 5" fill="none" stroke="#fff" stroke-width="2"/></svg>
    <svg width="17" height="17"><g fill="none" stroke="#fff"><circle cx="8" cy="8" r="7"/><ellipse cx="8" cy="8" rx="3" ry="7"/><path d="M1 8h14M2 4.500h12M2 11.500h7"/></g><circle cx="13" cy="13" r="3.500" fill="#16213a" stroke="#fff"/><path d="M10.500 10.500l5 5" stroke="#fff"/></svg>
    <svg width="17" height="14"><path d="M.5 5h3l3-3v10l-3-3h-3z" fill="none" stroke="#fff"/><path d="M9 5q1 2 0 4M11 3q3 4 0 8M13 1q5 6 0 12" fill="none" stroke="#ccd"/></svg>
    <b>中</b>
    <svg class="sg" width="16" height="16" viewBox="0 0 28 28"><use href="#sogou"/></svg>
    <svg class="note" width="26" height="26"><path d="M1 1h16v13H9l-4 4v-4H1z" fill="#fff"/><path d="M4 5h10M4 8h10M4 11h7" stroke="#16213a"/><circle cx="16" cy="16" r="8" fill="#2c3548" stroke="#99a"/><text x="13" y="21" font-size="13" fill="#fff">1</text></svg>
    <i class="peek"></i>
  </div>
</footer>
<script src="qr.js"></script>
</body>
</html>
```
FILE: styles.css
```css
* { box-sizing: border-box; margin: 0; padding: 0; }
html, body { height: 100%; }
body {
  display: flex; flex-direction: column; overflow: hidden; background: #fff; color: #111;
  font: 12px/16px "Noto Sans", "Noto Sans CJK SC", sans-serif;
}
button, input, select { font: inherit; color: inherit; background: none; border: 0; }
button { display: inline-flex; align-items: center; justify-content: center; white-space: nowrap; }
svg { display: block; flex: none; }
ol { list-style: none; }
.defs { position: absolute; width: 0; height: 0; }
.dd { color: #333; }
.dd.pale { color: #b5b8bd; }
.bar { width: 1px; height: 14px; background: #b3b6bb; flex: none; }
.dash { font-family: "Noto Sans CJK SC", sans-serif; line-height: 1; }

/* title bar */
.titlebar { height: 25px; flex: none; display: grid; grid-template-columns: 1fr auto 1fr; align-items: center; }
.quick { display: flex; align-items: center; gap: 6px; padding-left: 1px; }
.quick button { gap: 6px; margin-left: 2px; }
.quick .more { margin-left: 0; }
.doc-title { font-size: 12px; font-weight: 400; line-height: 16px; }
.winctl { display: flex; justify-content: flex-end; padding: 3px 2px 0 0; }
.winctl button { width: 46px; height: 20px; }

/* ribbon tabs */
.tabs { height: 28px; flex: none; display: flex; align-items: flex-end; border-bottom: 1px solid #8e9299; }
.tab { height: 27px; padding: 0 14px; }
.tab.file { width: 55px; margin-right: 5px; color: #fff; background: linear-gradient(#d8401b, #f05a2c 60%, #e84a1e); border: 1px solid #b8371a; border-bottom: 0; border-radius: 3px 3px 0 0; }
.tab.active { width: 51px; padding: 0 12px; margin-bottom: -1px; height: 28px; background: #fff; border: 1px solid #a8abb0; border-bottom: 0; border-radius: 3px 3px 0 0; }
.tabs-end { margin-left: auto; display: flex; align-items: center; gap: 9px; padding-right: 3px; height: 28px; }

/* ribbon */
.ribbon { height: 102px; flex: none; display: flex; background: linear-gradient(#fff 60%, #f4f5f7 75%, #e9edf1); border-bottom: 2px solid #7d8085; }
.group { display: flex; flex-direction: column; background: linear-gradient(#fff, #8f939a) right / 1px 100% no-repeat; }
.g-clip { width: 112px; } .g-slides { width: 119px; } .g-font { width: 234px; }
.g-para { width: 298px; } .g-draw { width: 330px; } .g-edit { width: 69px; }
.body { flex: 1; display: flex; }
.cap { height: 19px; display: flex; align-items: center; color: #444; padding-right: 5px; }
.cap span { flex: 1; padding-right: 6px; text-align: center; }
.cap span:only-child { padding: 0 0 0 5px; }
.big { flex-direction: column; justify-content: flex-start; padding-top: 5px; width: 48px; }
.big > svg:first-child { margin-bottom: 5px; }
.big > span { display: flex; align-items: center; gap: 4px; height: 18px; }
.big > .dd { margin-top: 6px; }
.wide { width: 58px; }
.stack { display: flex; flex-direction: column; padding-top: 3px; }
.row { height: 25px; justify-content: flex-start; gap: 3px; }
.row .dd { margin-left: 3px; }
.tight { padding-top: 2px; }
.tight .row { height: 22px; }
.off { color: #8d9095; }
.g-clip .stack { padding-left: 1px; }
.lines { display: flex; flex-direction: column; padding-top: 8px; }
.line { height: 33px; display: flex; align-items: center; }
.g-font .lines { padding-left: 5px; }
.ic { width: 24px; height: 22px; color: #777; gap: 3px; }
.dual { width: 32px; gap: 4px; }
.serif { font-family: "Liberation Serif", serif; font-size: 15px; }
.grow { gap: 0; }
.grow .dd { align-self: flex-start; margin-top: 3px; }
.big-a { font-size: 17px; }
.sm { font-size: 13px; }
.shade { text-shadow: 2px 1px 1px #bbb; }
.combo { display: flex; align-items: center; height: 26px; border: 1px solid #e3e6ea; padding-right: 5px; }
.combo select { appearance: none; flex: 1; min-width: 0; height: 24px; }
.name { width: 104px; } .size { width: 44px; border-left: 0; }
.g-para .lines { width: 169px; padding-left: 5px; }
.line .bar { margin: 0 3px; }
.gallery { width: 137px; height: 60px; margin: 5px 0 0 6px; display: flex; border: 1px solid #a9b3c2; background: #fcfdff; }
.gal-ctl { width: 13px; border-left: 1px solid #d5d9e0; display: grid; grid-template-rows: repeat(3, 1fr); place-items: center; }
.arrange { width: 47px; }
.quickst { width: 50px; margin-right: 4px; }
.g-draw .row { gap: 3px; }
.g-edit .stack { padding-left: 7px; }

/* work area */
.work { flex: 1; min-height: 0; display: flex; position: relative; background: #c6c8cd; border-bottom: 1px solid #777b82; }
.pane { width: 296px; flex: none; padding-top: 4px; display: flex; flex-direction: column; border-right: 5px double #9a9da3; background: #c8cace; }
.pane-tabs { height: 22px; flex: none; display: flex; align-items: stretch; background: linear-gradient(#c1c4c8, #b9bcc1); border-bottom: 1px solid #85898f; color: #555; }
.ptab { width: 60px; border-right: 1px solid #85898f; }
.ptab.on { background: #d3d5d9; color: #333; margin-bottom: -1px; }
.pane-x { margin-left: auto; width: 25px; }
.pane-main { flex: 1; min-height: 0; display: flex; }
.thumbs { flex: 1; overflow: hidden; padding-top: 3px; background: linear-gradient(100deg, #cfd1d5, #bfc2c7); }
.thumb { display: flex; height: 148px; margin-bottom: 4px; padding-left: 3px; }
.num { width: 15px; flex: none; display: flex; flex-direction: column; align-items: center; gap: 2px; padding: 7px 0 0 3px; font-size: 13px; font-weight: 700; line-height: 16px; }
.sel .num { background: linear-gradient(#fdf3ae, #f8e287 60%, #fbf3c6); }
.frame { flex: none; width: 254px; padding: 5px 5px 5px 6px; background: #a5a7ab; }
.sel .frame { background: #d9cc85; }
.mini { position: relative; width: 243px; height: 138px; background: #fff; border: 1px solid #707277; padding: 1px; font-size: 7px; line-height: 12px; overflow: hidden; }
.m-head { display: flex; height: 15px; }
.m-ban { width: 184px; background: #2a58a5; color: #fff; font-weight: 700; text-align: center; line-height: 15px; white-space: nowrap; }
.m-logo { display: flex; align-items: center; gap: 2px; padding-left: 4px; color: #3a5697; line-height: 7px; }
.m-logo small { display: block; font-size: 3px; line-height: 3px; text-align: center; }
.m-big { margin-top: 28px; text-align: center; font-size: 9px; line-height: 14px; font-weight: 700; }
.m-sub { margin: 15px 0 0 15px; text-align: center; font-size: 6px; font-weight: 700; line-height: 12px; }
.m-qr { position: absolute; left: 3px; bottom: 2px; }
.m-no { position: absolute; right: 1px; bottom: 1px; width: 20px; height: 14px; padding: 5px 0 0 11px; color: #fff; font: 700 6px/8px "Liberation Serif", serif; background: linear-gradient(to bottom right, transparent 50%, #2a58a5 50%); }
.mini h3 { margin: 1px 28px 0 26px; font-size: 8px; line-height: 13px; height: 15px; text-align: center; border-bottom: 2px solid #d9b73a; }
.mini h4 { padding-left: 18px; font-size: 7px; line-height: 9px; margin-top: 1px; }
.toc { counter-reset: n; padding: 3px 0 0 28px; font-weight: 700; }
.toc li { counter-increment: n; display: flex; }
.toc li::before { content: counter(n) "."; width: 12px; }
.m-para { padding: 0 20px 0 18px; font-size: 5px; line-height: 10px; text-indent: 10px; color: #333; }
.m-line { padding-left: 18px; font-size: 5px; line-height: 9px; white-space: nowrap; color: #222; }
.m-line.in, .m-code.in { padding-left: 27px; }
.flow { margin: 4px 0 0 32px; }
.m-code { padding-left: 18px; font: 4px/7px "Noto Sans", "Noto Sans CJK SC", sans-serif; white-space: pre; color: #333; }
pre.m-code { padding-left: 23px; }

.scroll { width: 16px; flex: none; display: flex; flex-direction: column; align-items: center; padding-top: 9px; background: linear-gradient(90deg, #d9dce2, #e8ebf0); }
.scroll .fill { flex: 1; }
.knob { width: 15px; margin-top: 6px; display: grid; place-items: center; background: linear-gradient(90deg, #f3f4f7, #d4d8df); border: 1px solid #71757d; border-radius: 1px; }
.knob i { width: 8px; height: 7px; background: repeating-linear-gradient(#555 0 1px, transparent 1px 3px); }
.k-left { height: 229px; }
.k-main { height: 77px; }
.narrow { width: 18px; padding-top: 6px; padding-bottom: 1px; }
.pager { margin-top: 5px; height: 51px; align-self: stretch; border-top: 1px solid #999; display: flex; flex-direction: column; align-items: center; gap: 6px; padding-top: 5px; }

.canvas { flex: 1; min-width: 0; display: flex; align-items: center; justify-content: center; padding: 3px 24px 0; background: linear-gradient(#cfd3d6 8%, #cbcdd2 12%, #c6c8ce 60%, #bdc2c5 78%, #babcc1); }
.slide { width: 100%; max-width: 1200px; aspect-ratio: 16 / 9; display: flex; flex-direction: column; background: #fff; box-shadow: 0 2px 1px 13px #a8aaae; }
.s-head { display: grid; grid-template-columns: 922fr 278fr; height: 76px; }
.s-ban { height: 76px; background: #295aa8; border: 1px solid #1d4480; color: #f2f9ff; font-size: 35px; line-height: 74px; font-weight: 700; text-align: center; white-space: nowrap; }
.s-ban .dash { -webkit-text-stroke: 2px #f2f9ff; }
.s-logo { display: flex; padding: 14px 0 0 20px; gap: 14px; color: #2b4a94; }
.s-name { padding-top: 2px; }
.s-name span { display: block; font-size: 34px; line-height: 36px; }
.s-en { display: flex; align-items: center; justify-content: center; gap: 8px; font: 18px/16px "Liberation Sans", sans-serif; }
.s-en i { width: 19px; height: 1px; background: #2b4a94; }
.s-title { margin-top: 140px; text-align: center; font-size: 47px; line-height: 64px; color: #1c1c1c; }
.shadowed { color: #000; text-shadow: 2px 2px 3px #888; }
.s-sub { margin-left: 72px; text-align: center; font-size: 30px; line-height: 40px; font-weight: 700; color: #1c1c1c; }
.s-title + .s-sub { margin-top: 92px; }
.s-sub + .s-sub { margin-top: 20px; }
.s-sub.mail { font-size: 31px; }
.s-foot { margin-top: auto; display: flex; justify-content: space-between; align-items: flex-end; }
.s-qr { margin: 0 0 9px 12px; }
.s-no { width: 100px; height: 71px; padding: 32px 0 0 62px; color: #fff; font: 700 28px/32px "Liberation Serif", serif; background: linear-gradient(to bottom right, transparent 50%, #295aa8 50%); }

.pointer { position: absolute; left: 388px; top: 446px; }
.meter { position: absolute; right: 0; top: 667px; }

/* status bar */
.status { position: relative; height: 26px; flex: none; display: flex; align-items: center; padding: 2px 5px 0 162px; border-top: 3px solid #eef0f3; background: linear-gradient(#8a8d92 1px, #e6e7ea 2px, #c3c5c9); color: #333; }
.st-item { padding: 0 9px 0 10px; line-height: 22px; border-right: 1px solid #8a8d92; }
.theme { padding-right: 17px; }
.st-right { margin-left: auto; display: flex; align-items: center; border-left: 1px solid #8a8d92; padding-left: 4px; }
.vw { width: 19px; height: 19px; }
.vw.on { background: #fbe087; border: 1px solid #b58f2c; border-radius: 2px; }
.pct { width: 48px; }
.zoom { appearance: none; width: 100px; height: 16px; background: linear-gradient(#888, #888) center / 100% 1px no-repeat; }
.zoom::-webkit-slider-thumb { appearance: none; width: 10px; height: 13px; background: #f6f6f7; border: 1px solid #555; border-radius: 1px 1px 5px 5px; }
.fit { margin-left: 8px; }
.ime { position: absolute; left: 0; bottom: 1px; height: 24px; width: 162px; display: flex; align-items: center; justify-content: space-between; padding-right: 4px; background: #fff; border: 1px solid #c8d3e2; border-left: 0; }
.ime b { font-size: 14px; color: #1f62ad; }

/* taskbar */
.taskbar { height: 40px; flex: none; display: flex; align-items: stretch; background: linear-gradient(90deg, #22333a, #1b2f3a 50%, #1c3038 75%, #15203a); color: #fff; }
.start { width: 48px; }
.search { width: 344px; display: flex; align-items: center; gap: 11px; padding-left: 12px; background: #f6f3f6; }
.search input { flex: 1; min-width: 0; outline: 0; font-size: 14px; line-height: 20px; }
.search input::placeholder { color: #222; opacity: 1; }
.app { width: 48px; border-bottom: 2px solid transparent; }
.app.open { width: 50px; border-bottom-color: #76b9ed; }
.app.on { background: #47555c; }
.tray { margin-left: auto; display: flex; align-items: center; gap: 9px; padding-right: 4px; }
.tray b { font-size: 13px; font-weight: 500; margin: 0 0 0 -2px; }
.sg { margin: 0 12px 0 6px; }
.note { margin-right: 1px; }
.peek { width: 1px; height: 40px; background: #6b7488; }
```
FILE: qr.js
```js
// Fills the slide's QR symbol: 37 x 37 modules, three finder squares in the corners.
const N = 37;
let seed = 20153;
const next = () => (seed = (seed * 1103515245 + 12345) % 2147483648) / 2147483648;

function finder(x, y) {
  if (x < 0 || y < 0 || x > 6 || y > 6) return false;
  const ring = Math.max(Math.abs(x - 3), Math.abs(y - 3));
  return ring !== 2;
}

let d = '';
for (let y = 0; y < N; y++) {
  for (let x = 0; x < N; x++) {
    const left = x < 8, right = x > N - 9, top = y < 8, bottom = y > N - 9;
    const random = next() < 0.53;
    let on = random;
    if (left && top) on = finder(x, y);
    else if (right && top) on = finder(x - 30, y);
    else if (left && bottom) on = finder(x, y - 30);
    if (on) d += `M${x * 4} ${y * 3}h4v3h-4z`;
  }
}
document.querySelector('.qr-cells').setAttribute('d', d);
```
